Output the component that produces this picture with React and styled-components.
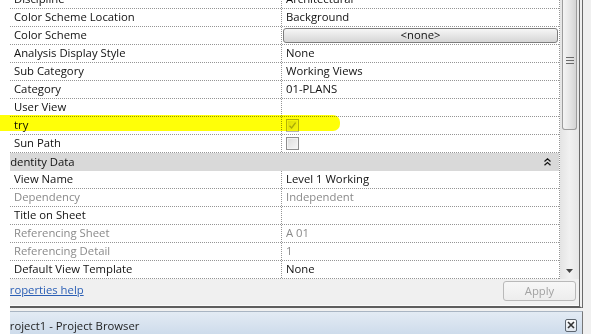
import React from "react";
import styled, { createGlobalStyle } from "styled-components";

const GlobalStyle = createGlobalStyle`
  html, body { margin: 0; padding: 0; background: #fff; }
  body {
    width: 591px; height: 334px; overflow: hidden;
    font-family: "Open Sans", "Noto Sans", sans-serif;
    font-size: 11.3px;
    color: #111;
  }
`;

const Page = styled.div`
  position: relative;
  width: 591px;
  height: 334px;
  overflow: hidden;
  padding-left: 10px;
  box-sizing: border-box;
  background: #fff;
`;

const Frame = styled.div`
  height: 100%;
  background: #f0f0f0;
  overflow: hidden;
  display: flex;
  flex-direction: column;
`;

const Panel = styled.div`
  width: 573px;
  box-sizing: border-box;
  border-right: 4px double #6a6a6a;
  border-bottom: 2px solid #5e5e5e;
  display: flex;
  flex-direction: column;
`;

const Body = styled.div`
  display: flex;
  margin-top: -9px;
  height: 288px;
`;

const Table = styled.div`
  width: 550px;
  box-sizing: border-box;
  background: #fff;
  border-right: 1px dotted #959595;
`;

const Row = styled.div`
  display: grid;
  grid-template-columns: 272px 1fr;
  height: 18px;
  box-sizing: border-box;
  border-bottom: 1px dotted #959595;
`;

const NameCell = styled.div`
  padding: 0 0 1px 4px;
  line-height: 16px;
  white-space: nowrap;
  overflow: hidden;
  border-right: 1px dotted #959595;
  color: ${(p) => (p.$muted ? "#8a8a8a" : "#111")};
`;

const ValueCell = styled.div`
  padding: 0 0 1px 4px;
  line-height: 16px;
  white-space: nowrap;
  overflow: hidden;
  display: flex;
  align-items: center;
  color: ${(p) => (p.$muted ? "#8a8a8a" : "#111")};
`;

const ButtonCell = styled.div`
  padding: 1px;
  display: flex;
`;

const PickButton = styled.div`
  flex: 1;
  height: 15px;
  box-sizing: border-box;
  border: 1px solid #7d7d7d;
  border-radius: 3px;
  background: linear-gradient(#f6f6f6, #e6e6e6 50%, #d6d6d6);
  text-align: center;
  line-height: 12px;
  color: #111;
`;

const Check = styled.div`
  width: 13px;
  height: 13px;
  box-sizing: border-box;
  border: 1px solid ${(p) => (p.$disabled ? "#b4b4b4" : "#8e8e8e")};
  background: linear-gradient(135deg, #dcdcdc, #f7f7f7);
  box-shadow: inset 0 0 0 1px #f4f4f4;
  display: flex;
  align-items: center;
  justify-content: center;
`;

const GroupRow = styled.div`
  height: 18px;
  background: #d9d9d9;
  display: flex;
  align-items: center;
  justify-content: space-between;
  padding-right: 8px;
  line-height: 16px;
  padding-bottom: 1px;
  box-sizing: border-box;
`;

const GroupTitle = styled.span`
  margin-left: -3px;
  color: #111;
`;

const Scroll = styled.div`
  width: 19px;
  padding: 0 2px;
  box-sizing: border-box;
  background: linear-gradient(90deg, #e4e4e4, #f1f1f1 50%, #e6e6e6);
  display: flex;
  flex-direction: column;
`;

const Thumb = styled.div`
  height: 139px;
  box-sizing: border-box;
  border: 1px solid #9c9c9c;
  border-top: none;
  border-radius: 0 0 3px 3px;
  background: linear-gradient(90deg, #f4f4f4, #e6e6e6 50%, #d4d4d4);
  display: flex;
  align-items: center;
  justify-content: center;
`;

const Track = styled.div`
  flex: 1;
`;

const ArrowBox = styled.div`
  height: 16px;
  display: flex;
  align-items: center;
  justify-content: center;
`;

const Footer = styled.div`
  height: 27px;
  box-sizing: border-box;
  border-bottom: 1px solid #fbfbfb;
  display: flex;
  justify-content: space-between;
  align-items: flex-start;
  padding: 2px 3px 0 0;
`;

const HelpLink = styled.a`
  margin-left: -7px;
  margin-top: 1px;
  color: #2b5fb5;
  text-decoration: underline;
  line-height: 16px;
`;

const ApplyButton = styled.div`
  width: 73px;
  height: 20px;
  box-sizing: border-box;
  border: 1px solid #b9b9b9;
  border-radius: 3px;
  background: linear-gradient(#f7f7f7, #ededed);
  color: #a2a2a2;
  text-align: center;
  line-height: 17px;
`;

const TitleBar = styled.div`
  margin-top: 3px;
  width: 573px;
  height: 28px;
  flex-shrink: 0;
  box-sizing: border-box;
  border-top: 1px solid #a9b5c3;
  border-right: 1px solid #777;
  background: linear-gradient(#e3ebf4, #c9d8e9);
  display: flex;
  align-items: center;
  justify-content: space-between;
  padding: 0 5px 1px 0;
`;

const TitleText = styled.span`
  margin-left: -7px;
  color: #1e1e1e;
`;

const CloseBox = styled.div`
  width: 12px;
  height: 13px;
  box-sizing: border-box;
  border: 1px solid #5d6670;
  border-radius: 2px;
  background: linear-gradient(#fbfbfb, #dfe6ee);
  display: flex;
  align-items: center;
  justify-content: center;
`;

const Highlight = styled.div`
  position: absolute;
  left: 0;
  top: 115px;
  width: 340px;
  height: 16px;
  background: #ffff08;
  mix-blend-mode: multiply;
  border-radius: 0 7px 7px 0;
  pointer-events: none;
`;

const rows = [
  { name: "Discipline", value: "Architectural" },
  { name: "Color Scheme Location", value: "Background" },
  { name: "Color Scheme", button: "<none>" },
  { name: "Analysis Display Style", value: "None" },
  { name: "Sub Category", value: "Working Views" },
  { name: "Category", value: "01-PLANS" },
  { name: "User View", value: "" },
  { name: "try", check: true, disabled: true },
  { name: "Sun Path", check: false },
  { group: "Identity Data" },
  { name: "View Name", value: "Level 1 Working" },
  { name: "Dependency", value: "Independent", muted: true },
  { name: "Title on Sheet", value: "" },
  { name: "Referencing Sheet", value: "A 01", muted: true },
  { name: "Referencing Detail", value: "1", muted: true },
  { name: "Default View Template", value: "None" },
];

function CheckBox({ checked, disabled }) {
  return (
    <Check $disabled={disabled}>
      {checked && (
        <svg width="9" height="9" viewBox="0 0 9 9">
          <path d="M1.5 4.8 L3.6 7 L7.6 1.6" fill="none" stroke={disabled ? "#a9a9a9" : "#333"} strokeWidth="1.3" />
        </svg>
      )}
    </Check>
  );
}

export default function App() {
  return (
    <>
      <GlobalStyle />
      <Page>
        <Frame>
          <Panel>
            <Body>
              <Table>
                {rows.map((r, i) =>
                  r.group ? (
                    <GroupRow key={i}>
                      <GroupTitle>{r.group}</GroupTitle>
                      <svg width="7" height="8" viewBox="0 0 7 8">
                        <path d="M0.5 3.5 L3.5 0.8 L6.5 3.5 M0.5 7.2 L3.5 4.5 L6.5 7.2" fill="none" stroke="#111" strokeWidth="1.2" />
                      </svg>
                    </GroupRow>
                  ) : (
                    <Row key={i}>
                      <NameCell $muted={r.muted}>{r.name}</NameCell>
                      {r.button ? (
                        <ButtonCell>
                          <PickButton>{r.button}</PickButton>
                        </ButtonCell>
                      ) : r.check !== undefined ? (
                        <ValueCell>
                          <CheckBox checked={r.check} disabled={r.disabled} />
                        </ValueCell>
                      ) : (
                        <ValueCell $muted={r.muted}>{r.value}</ValueCell>
                      )}
                    </Row>
                  )
                )}
              </Table>
              <Scroll>
                <Thumb>
                  <svg width="8" height="9" viewBox="0 0 8 9">
                    <path d="M0 1.5 H8 M0 4.5 H8 M0 7.5 H8" stroke="#6a6a6a" strokeWidth="1" />
                  </svg>
                </Thumb>
                <Track />
                <ArrowBox>
                  <svg width="7" height="4" viewBox="0 0 7 4">
                    <path d="M0 0 H7 L3.5 4 Z" fill="#444" />
                  </svg>
                </ArrowBox>
              </Scroll>
            </Body>
            <Footer>
              <HelpLink>Properties help</HelpLink>
              <ApplyButton>Apply</ApplyButton>
            </Footer>
          </Panel>
          <TitleBar>
            <TitleText>Project1 - Project Browser</TitleText>
            <CloseBox>
              <svg width="8" height="8" viewBox="0 0 8 8">
                <path d="M1 1 L7 7 M7 1 L1 7" stroke="#333" strokeWidth="1.6" />
              </svg>
            </CloseBox>
          </TitleBar>
        </Frame>
        <Highlight />
      </Page>
    </>
  );
}
